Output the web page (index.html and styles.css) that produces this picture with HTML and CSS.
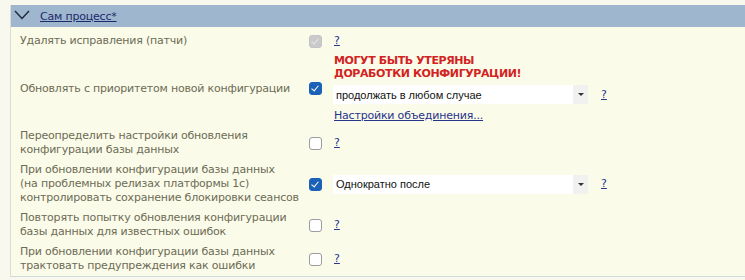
FILE: index.html
```html
<html>
<head>
    <title>Сам процесс</title>
    <meta http-equiv="Content-Type" content="text/html;charset=UTF-8"/>
    <link rel="stylesheet" href="styles.css">
</head>
<body>
<div class="section">
    <div class="section-head">
        <svg class="chevron" width="16" height="10" viewBox="0 0 16 10">
            <polyline points="1,1 8,8.5 15,1" fill="none" stroke="#1e2433" stroke-width="1.3"/>
        </svg>
        <a href="#" class="section-title">Сам процесс*</a>
    </div>
    <div class="section-body">
        <div class="row">
            <div class="label">Удалять исправления (патчи)</div>
            <span class="cb checked disabled"></span>
            <div class="value"><a href="#" class="help">?</a></div>
        </div>
        <div class="row">
            <div class="label">Обновлять с приоритетом новой конфигурации</div>
            <span class="cb checked"></span>
            <div class="value">
                <div class="warning">МОГУТ БЫТЬ УТЕРЯНЫ<br>ДОРАБОТКИ КОНФИГУРАЦИИ!</div>
                <div class="select-line">
                    <div class="select"><span>продолжать в любом случае</span><span class="select-btn"></span></div>
                    <a href="#" class="help">?</a>
                </div>
                <a href="#" class="merge-link">Настройки объединения...</a>
            </div>
        </div>
        <div class="row">
            <div class="label">Переопределить настройки обновления<br>конфигурации базы данных</div>
            <span class="cb"></span>
            <div class="value"><a href="#" class="help">?</a></div>
        </div>
        <div class="row">
            <div class="label">При обновлении конфигурации базы данных<br>(на проблемных релизах платформы 1с)<br>контролировать сохранение блокировки сеансов</div>
            <span class="cb checked"></span>
            <div class="value">
                <div class="select-line">
                    <div class="select"><span>Однократно после</span><span class="select-btn"></span></div>
                    <a href="#" class="help">?</a>
                </div>
            </div>
        </div>
        <div class="row">
            <div class="label">Повторять попытку обновления конфигурации<br>базы данных для известных ошибок</div>
            <span class="cb"></span>
            <div class="value"><a href="#" class="help">?</a></div>
        </div>
        <div class="row">
            <div class="label">При обновлении конфигурации базы данных<br>трактовать предупреждения как ошибки</div>
            <span class="cb"></span>
            <div class="value"><a href="#" class="help">?</a></div>
        </div>
    </div>
</div>
</body>
</html>
```

FILE: styles.css
```css
body {
    margin: 0;
    padding-top: 5px;
    background-color: #f8f8ee;
    font-family: "DejaVu Sans", Verdana, sans-serif;
    font-size: 11px;
}

.section {
    margin-left: 10px;
    border-left: solid 1px #dcdcd2;
    border-bottom: solid 1px #d2dade;
    background-color: #fbfbe9;
}

.section-head {
    display: flex;
    align-items: center;
    height: 22px;
    background-color: #9fb6cf;
    padding-left: 3px;
}

.chevron {
    margin-right: 10px;
    margin-top: -2px;
}

.section-title {
    color: #1c2a6c;
    font-size: 11px;
    letter-spacing: -0.2px;
}

.section-body {
    padding: 4px 0 0 9px;
}

.row {
    display: grid;
    grid-template-columns: 289px 24px 1fr;
    align-items: center;
    padding: 3px 0;
}

.label {
    color: #6c6c56;
    line-height: 14px;
    letter-spacing: -0.2px;
}

.value {
    display: flex;
    flex-direction: column;
    align-items: flex-start;
}

.cb {
    display: block;
    width: 11px;
    height: 11px;
    border: solid 1px #9c9c9c;
    border-radius: 3px;
    background-color: #fff;
    position: relative;
}
.cb.checked {
    background-color: #1b61b8;
    border-color: #1b61b8;
}
.cb.checked.disabled {
    background-color: #cacaca;
    border-color: #c4c4c4;
}
.cb.checked:after {
    content: "";
    position: absolute;
    left: 3px;
    top: 1px;
    width: 3px;
    height: 6px;
    border: solid #fff;
    border-width: 0 1px 1px 0;
    transform: rotate(40deg);
}
.cb.checked.disabled:after {
    border-color: #e6e6e6;
}

.help {
    color: #27348c;
    line-height: 14px;
    margin-left: 1px;
}

.warning {
    color: #d22323;
    font-weight: bold;
    line-height: 13px;
    letter-spacing: -0.4px;
    margin-left: 1px;
    margin-bottom: 5px;
}

.select-line {
    display: flex;
    align-items: center;
}
.select-line .help {
    margin-left: 13px;
}

.select {
    display: flex;
    align-items: center;
    width: 255px;
    height: 19px;
    background-color: #fff;
    font-family: "Liberation Sans", Arial, sans-serif;
    font-size: 11px;
    color: #111;
}
.select span:first-child {
    flex: 1;
    padding-left: 3px;
}
.select-btn {
    width: 15px;
    height: 19px;
    background-color: #f1f1ef;
    position: relative;
}
.select-btn:after {
    content: "";
    position: absolute;
    left: 5px;
    top: 8px;
    border-left: 3px solid transparent;
    border-right: 3px solid transparent;
    border-top: 3px solid #333;
}

.merge-link {
    color: #27348c;
    line-height: 14px;
    letter-spacing: -0.2px;
    margin: 5px 0 0 1px;
}
```
